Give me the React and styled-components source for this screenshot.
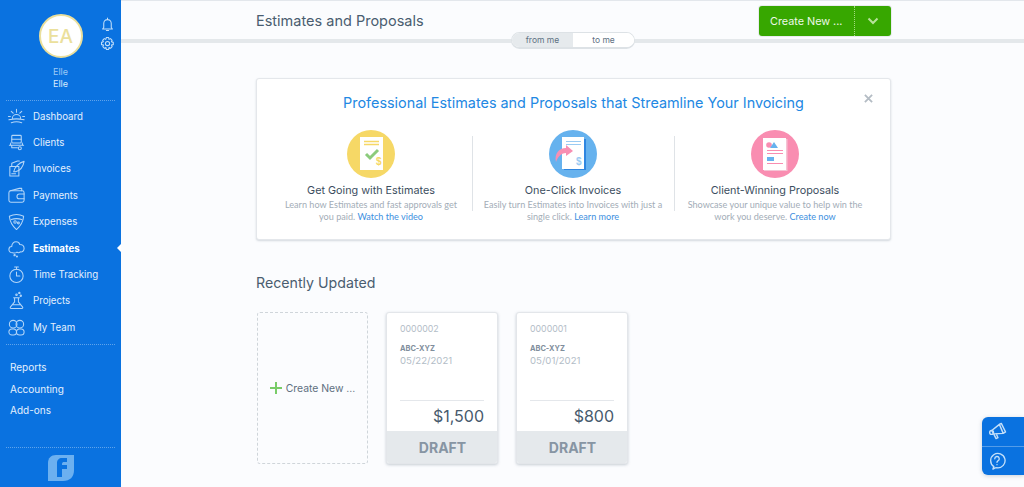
import React from "react";
import styled, { createGlobalStyle } from "styled-components";

const Global = createGlobalStyle`
  html, body { margin: 0; padding: 0; height: 487px; overflow: hidden; background: #fbfcfe; }
  * { box-sizing: border-box; }
  body { font-family: "Inter", "Liberation Sans", sans-serif; }
`;

const Page = styled.div`
  display: flex; width: 1024px; height: 487px; overflow: hidden; position: relative;
  background: #fbfcfe;
`;
const Sidebar = styled.aside`
  width: 121px; height: 487px; flex: none; background: #0a72e0;
  display: flex; flex-direction: column; color: #fff;
`;
const Profile = styled.div`
  display: flex; flex-direction: column; align-items: center;
  padding-top: 14px; height: 101px; margin: 0 6px;
  border-bottom: 1px dotted rgba(255,255,255,.35);
  position: relative;
`;
const Avatar = styled.div`
  width: 44px; height: 44px; border-radius: 50%; background: #fff; border: 2px solid #eadf9c;
  display: flex; align-items: center; justify-content: center;
  color: #ebe09c; font-size: 19px; font-weight: 500;
`;
const Alerts = styled.div`
  position: absolute; left: 94px; top: 17px; display: flex; flex-direction: column; gap: 4px;
  color: #c3dff9;
`;
const ProfileName = styled.div`
  font-size: 9px; line-height: 12px; color: ${p => p.$dim ? "#9cc9f5" : "#d8eafc"};
  margin-top: ${p => p.$dim ? "8px" : "0"};
`;
const Nav = styled.nav`
  display: flex; flex-direction: column; padding-top: 2px;
`;
const NavRow = styled.a`
  display: flex; align-items: center; height: 26.4px; padding-left: 7px; gap: 7px; position: relative;
  font-size: 9.7px; color: ${p => p.$active ? "#fff" : "#e4f0fd"}; font-weight: ${p => p.$active ? 700 : 400};
  svg { flex: none; color: #b4d6f8; }
  ${p => p.$active && `
    &::after {
      content: ""; position: absolute; right: 0; top: 9px;
      border: 4px solid transparent; border-right-color: #fff; border-left-width: 0;
    }
  `}
`;
const Links = styled.div`
  margin: 3px 6px 0; padding: 12px 4px 0; height: 104px;
  border-top: 1px dotted rgba(255,255,255,.35);
  border-bottom: 1px dotted rgba(255,255,255,.35);
`;
const LinkRow = styled.div`
  height: 21.5px; display: flex; align-items: center; font-size: 10px; color: #e4f0fd;
`;
const LogoBox = styled.div`
  display: flex; justify-content: center; padding-top: 7px;
`;

const Main = styled.main`
  flex: 1; display: flex; flex-direction: column; position: relative;
  border-top: 1px solid #e3e7ec;
`;
const Header = styled.header`
  height: 42px; border-bottom: 4px solid #e4e8eb; padding: 5px 133px 0 135px;
  display: flex; justify-content: space-between; align-items: flex-start; position: relative;
`;
const Title = styled.h1`
  margin: 1px 0 0; font-size: 14.5px; line-height: 28px; font-weight: 400; color: #4a5d70;
`;
const CreateButton = styled.div`
  width: 132px; height: 30px; background: #37a700; border-radius: 3px; color: #eef8e8;
  display: flex; align-items: center; font-size: 10.8px;
  box-shadow: 0 0 0 1px #e9ecef;
`;
const CreateLabel = styled.span`
  width: 96px; height: 100%; display: flex; align-items: center; padding-left: 11px;
  border-right: 1px dotted #a5dc80;
`;
const CreateCaret = styled.span`
  flex: 1; display: flex; align-items: center; justify-content: center; color: #b7e29a;
`;
const Toggle = styled.div`
  position: absolute; left: 390px; top: 31px; width: 124px; height: 17px; display: flex;
  border-radius: 9px; border: 1px solid #dde2e6; border-bottom-width: 2px; overflow: hidden; background: #fff;
  font-size: 8.5px; color: #5e7183;
`;
const ToggleSide = styled.div`
  flex: 1; display: flex; align-items: center; justify-content: center;
  background: ${p => p.$on ? "#e6eaed" : "#fff"};
`;

const Content = styled.div`
  padding: 35px 133px 0 135px; display: flex; flex-direction: column;
`;
const Banner = styled.section`
  height: 162px; background: #fff; border: 1px solid #e4e7eb; border-radius: 3px;
  box-shadow: 0 1px 2px rgba(120,135,150,.3); padding: 14px 13px 0; position: relative;
`;
const Close = styled.div`
  position: absolute; right: 17px; top: 8px; color: #b4bcc4;
`;
const BannerTitle = styled.h2`
  margin: 0; text-align: center; font-size: 14.4px; line-height: 20px; font-weight: 400; color: #2288e3;
`;
const Columns = styled.div`
  display: grid; grid-template-columns: repeat(3, 202px); margin-top: 17px;
`;
const Column = styled.div`
  display: flex; flex-direction: column; align-items: center; text-align: center; padding: 0 10px;
  height: 100px; position: relative;
  ${p => !p.$first && `
    &::before {
      content: ""; position: absolute; left: 0; top: 6px; height: 75px; width: 1px; background: #dfe3e7;
    }
  `}
`;
const ColumnTitle = styled.div`
  margin-top: 6px; font-size: 10.8px; line-height: 14px; color: #3c4e60;
`;
const ColumnText = styled.div`
  font-family: "Lato", "Liberation Sans", sans-serif;
  font-size: 9.1px; line-height: 12px; color: #a3adb7; margin-top: 1px;
  a { color: #3d8fe0; }
`;
const Section = styled.h2`
  margin: 33px 0 0; font-size: 14.2px; line-height: 20px; font-weight: 400; color: #4a5d70;
`;
const Cards = styled.div`
  display: flex; gap: 18px; margin-top: 19px; padding-left: 1px;
`;
const NewCard = styled.div`
  width: 111px; height: 152px; border: 1px dashed #cfd5da; border-radius: 3px;
  display: flex; align-items: center; justify-content: center; gap: 4px;
  font-size: 10.4px; color: #5e6f80;
`;
const Plus = styled.span`
  display: flex; color: #79cc68;
`;
const Card = styled.article`
  width: 112px; height: 152px; background: #fff; border-radius: 3px; overflow: hidden;
  border: 1px solid #e3e6ea; box-shadow: 0 1px 3px rgba(120,135,150,.4);
  display: flex; flex-direction: column;
`;
const CardBody = styled.div`
  flex: 1; padding: 10px 13px 0; display: flex; flex-direction: column;
`;
const Number = styled.div`
  font-size: 8.8px; line-height: 12px; color: #b3bdc7;
`;
const Client = styled.div`
  font-size: 7.4px; line-height: 12px; font-weight: 700; color: #7f8e9c; margin-top: 8px;
`;
const DateText = styled.div`
  font-size: 9.6px; line-height: 12px; color: #b3bdc7;
`;
const Amount = styled.div`
  margin-top: 33px; border-top: 1px solid #e4e7eb; text-align: right;
  font-size: 16px; line-height: 30px; color: #475a6d;
`;
const Status = styled.div`
  height: 32px; background: #e5e9ec; display: flex; align-items: center; justify-content: center;
  font-size: 14px; font-weight: 700; color: #8795a3; padding-left: 1px;
`;
const Help = styled.div`
  position: absolute; right: 0; top: 417px; width: 42px; height: 58px; background: #0a72e0;
  border-radius: 6px 0 0 6px; display: flex; flex-direction: column; color: #c3dff9;
  box-shadow: 0 1px 4px rgba(90,110,130,.3);
`;
const HelpRow = styled.div`
  flex: 1; display: flex; align-items: center; padding-left: 6px;
  & + & { border-top: 1px solid rgba(255,255,255,.3); }
`;

const Ico = ({ children, s = 19, w = 1.1 }) => (
  <svg width={s} height={s} viewBox="0 0 20 20" fill="none" stroke="currentColor" strokeWidth={w} strokeLinecap="round" strokeLinejoin="round">{children}</svg>
);

const icons = {
  Dashboard: <Ico><path d="M5.500 12.500a4.500 4.500 0 0 1 9 0M2 13.500c4-1 12-1 16 0M4.500 16.500c3-1 8-1 11 0M10 2.500v3M4.500 4.500l2 2M15.500 4.500l-2 2M1.500 10h2M16.500 10h2" /></Ico>,
  Clients: <Ico><rect x="5" y="2.500" width="10" height="8" rx="1" /><path d="M5 6.500h10M2.500 13h15M4 10.500L3.500 13M16 10.500l.5 2.500M5 13v2.500h6" /><circle cx="13.500" cy="16" r="1.600" /></Ico>,
  Invoices: <Ico><path d="M3 8h9.500v10H3zM5 8V4.500L11 2h2" /><path d="M7 13.500c1-5 5.500-9.500 11-11-.8 5-4 9.500-9 11zM5 15.500h4" /></Ico>,
  Payments: <Ico><rect x="2" y="5" width="16" height="12" rx="2" /><path d="M3.500 5l9.500-2.500h2.500V5M18 8.500h-5a2.500 2.500 0 0 0 0 5h5" /></Ico>,
  Expenses: <Ico><path d="M2.500 4.500c5-2.500 10-2.500 15 0-.5 6-3.500 10.500-7.500 14-4-3.500-7-8-7.500-14zM4.500 8c4-1.500 7-1.500 11 0" /><circle cx="8.500" cy="10.500" r="1.300" /><circle cx="12" cy="11.500" r="1" /></Ico>,
  Estimates: <Ico><path d="M6 14.500C3.500 14.500 2 13 2 11s1.500-3 3-3c0-3 2-5 4.500-5 2 0 3.500 1 4 2.800C16 5.800 18 7.500 18 10s-2 4-4 3.500c-1 1-2.500 1.200-3.500.3-1.200 1-3 1.200-4.500.7z" /><circle cx="8" cy="17" r=".7" /><circle cx="10.500" cy="18.300" r=".5" /></Ico>,
  "Time Tracking": <Ico><circle cx="10" cy="11.500" r="7" /><path d="M8 2h4M10 2v2.500M10 7.500v4h3.500" /></Ico>,
  Projects: <Ico><path d="M8 7v4.500L3.500 17a1 1 0 0 0 .8 1.500h11.400a1 1 0 0 0 .8-1.500L12 11.500V7zM7 7h6M5.500 14.500h9" /><circle cx="10" cy="4" r=".8" /><circle cx="13" cy="2" r=".7" /><circle cx="14.500" cy="5" r=".7" /></Ico>,
  "My Team": <Ico><circle cx="6.500" cy="6.500" r="4" /><circle cx="13.500" cy="6.500" r="4" /><rect x="2" y="11.500" width="8" height="6.500" rx="3.200" /><rect x="10" y="11.500" width="8" height="6.500" rx="3.200" /></Ico>,
};

const navItems = ["Dashboard", "Clients", "Invoices", "Payments", "Expenses", "Estimates", "Time Tracking", "Projects", "My Team"];

const YellowIcon = () => (
  <svg width="48" height="48" viewBox="0 0 48 48">
    <circle cx="24" cy="24" r="24" fill="#f6d866" />
    <path d="M13 7h23v33H13z" fill="#fff" />
    <path d="M17 11.500h15M17 14.500h15" stroke="#f6d866" strokeWidth="1.500" />
    <path d="M19 24l4 4 8-8" fill="none" stroke="#8ccb7c" strokeWidth="3" />
    <text x="29" y="35" fontSize="10" fontFamily="Liberation Sans" fontWeight="700" fill="#f6d866">$</text>
  </svg>
);
const BlueIcon = () => (
  <svg width="48" height="48" viewBox="0 0 48 48">
    <circle cx="24" cy="24" r="24" fill="#66b2ee" />
    <path d="M15 9l22 0v31H15z" fill="#2f86e0" />
    <path d="M13 7h22v32H13z" fill="#fff" />
    <path d="M17 11.500h15M17 14.500h15" stroke="#9acbf3" strokeWidth="1" />
    <path d="M7 32c-2-8 3-14 10-14v-3l7 6-7 5v-3c-4 0-8 3-10 9z" fill="#f78fb3" />
    <text x="27" y="35" fontSize="10" fontFamily="Liberation Sans" fontWeight="700" fill="#9acbf3">$</text>
  </svg>
);
const PinkIcon = () => (
  <svg width="48" height="48" viewBox="0 0 48 48">
    <circle cx="24" cy="24" r="24" fill="#f98db1" />
    <path d="M12 8h23v32H12z" fill="#fff" />
    <path d="M35 9h1.500v32H13v-1h22z" fill="#f5c3d4" />
    <circle cx="18" cy="15" r="2.800" fill="#f98db1" />
    <path d="M19 18l4-6 4 6z" fill="#66b2ee" />
    <path d="M16 20.500h16M16 23.500h16M16 33.500h16" stroke="#f98db1" strokeWidth="1" />
    <rect x="16" y="27" width="7" height="4" fill="#66b2ee" />
  </svg>
);

export default function App() {
  return (
    <Page>
      <Global />
      <Sidebar>
        <Profile>
          <Avatar>EA</Avatar>
          <Alerts>
            <Ico s={15} w={1.4}><path d="M5 14V8.500a5 5 0 0 1 10 0V14l1.500 2h-13zM8.500 18h3M10 1.500v2" /></Ico>
            <Ico s={15} w={1.4}><circle cx="10" cy="10" r="2.800" /><path d="M8.500 2h3l.5 2.500 2-1 2.200 2.200-1 2 2.500.8v3l-2.500.5 1 2.200-2.200 2.200-2-1-.5 2.600h-3l-.5-2.600-2 1-2.200-2.200 1-2.200L2 11.500v-3l2.500-.8-1-2 2.200-2.200 2 1z" /></Ico>
          </Alerts>
          <ProfileName $dim>Elle</ProfileName>
          <ProfileName>Elle</ProfileName>
        </Profile>
        <Nav>
          {navItems.map(n => (
            <NavRow key={n} $active={n === "Estimates"}>{icons[n]}<span>{n}</span></NavRow>
          ))}
        </Nav>
        <Links>
          <LinkRow>Reports</LinkRow>
          <LinkRow>Accounting</LinkRow>
          <LinkRow>Add-ons</LinkRow>
        </Links>
        <LogoBox>
          <svg width="26" height="26" viewBox="0 0 26 26">
            <path d="M8 0H26V15C26 22 22 26 15 26H0V8C0 3 3 0 8 0Z" fill="#6cb0f0" />
            <path d="M9 22V8c0-3 2-5 5-5h5v4h-3c-1 0-2 .5-2 2v1h5v4h-5v8z" fill="#0a72e0" />
          </svg>
        </LogoBox>
      </Sidebar>
      <Main>
        <Header>
          <Title>Estimates and Proposals</Title>
          <CreateButton>
            <CreateLabel>Create New ...</CreateLabel>
            <CreateCaret>
              <svg width="12" height="8" viewBox="0 0 12 8" fill="none" stroke="currentColor" strokeWidth="2"><path d="M1.500 1.500L6 6l4.500-4.500" /></svg>
            </CreateCaret>
          </CreateButton>
          <Toggle>
            <ToggleSide $on>from me</ToggleSide>
            <ToggleSide>to me</ToggleSide>
          </Toggle>
        </Header>
        <Content>
          <Banner>
            <Close>
              <svg width="9" height="9" viewBox="0 0 10 10" stroke="currentColor" strokeWidth="2"><path d="M1 1l8 8M9 1l-8 8" /></svg>
            </Close>
            <BannerTitle>Professional Estimates and Proposals that Streamline Your Invoicing</BannerTitle>
            <Columns>
              <Column $first>
                <YellowIcon />
                <ColumnTitle>Get Going with Estimates</ColumnTitle>
                <ColumnText>Learn how Estimates and fast approvals get you paid. <a>Watch the video</a></ColumnText>
              </Column>
              <Column>
                <BlueIcon />
                <ColumnTitle>One-Click Invoices</ColumnTitle>
                <ColumnText>Easily turn Estimates into Invoices with just a single click. <a>Learn more</a></ColumnText>
              </Column>
              <Column>
                <PinkIcon />
                <ColumnTitle>Client-Winning Proposals</ColumnTitle>
                <ColumnText>Showcase your unique value to help win the work you deserve. <a>Create now</a></ColumnText>
              </Column>
            </Columns>
          </Banner>
          <Section>Recently Updated</Section>
          <Cards>
            <NewCard>
              <Plus><svg width="12" height="12" viewBox="0 0 12 12" stroke="currentColor" strokeWidth="2"><path d="M6 0v12M0 6h12" /></svg></Plus>
              Create New ...
            </NewCard>
            <Card>
              <CardBody>
                <Number>0000002</Number>
                <Client>ABC-XYZ</Client>
                <DateText>05/22/2021</DateText>
                <Amount>$1,500</Amount>
              </CardBody>
              <Status>DRAFT</Status>
            </Card>
            <Card>
              <CardBody>
                <Number>0000001</Number>
                <Client>ABC-XYZ</Client>
                <DateText>05/01/2021</DateText>
                <Amount>$800</Amount>
              </CardBody>
              <Status>DRAFT</Status>
            </Card>
          </Cards>
        </Content>
      </Main>
      <Help>
        <HelpRow>
          <svg width="19" height="19" viewBox="0 0 20 20" fill="none" stroke="currentColor" strokeWidth="1.500" strokeLinejoin="round"><path d="M4 9l8-6.500 4 9.500-10 .5zM12 2.500l2-1 4.500 9-2.500 1.500M6 12.500l2.500 5 2-1-2-4.500" /><circle cx="3.800" cy="11" r="2" /></svg>
        </HelpRow>
        <HelpRow>
          <svg width="18" height="18" viewBox="0 0 20 20" fill="none" stroke="currentColor" strokeWidth="1.500" strokeLinecap="round" strokeLinejoin="round"><path d="M6.500 16.200A8 8 0 1 1 10 17.500c-.8 0-1.500 0-2 .2l-2.500 1.300z" /><path d="M7.500 7.500a2.500 2.500 0 1 1 3.500 2.300c-.7.400-1 .8-1 1.700M10 14v.1" /></svg>
        </HelpRow>
      </Help>
    </Page>
  );
}
